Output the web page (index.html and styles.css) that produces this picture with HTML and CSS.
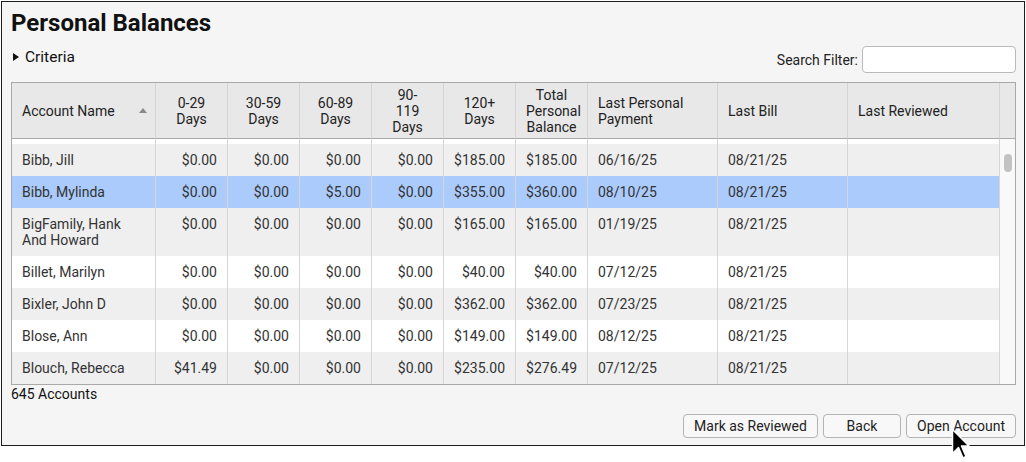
FILE: index.html
```html
<!DOCTYPE html>
<html lang="en">
<head>
	<meta charset="UTF-8">
	<title>Personal Balances</title>
	<link rel="stylesheet" href="styles.css">
</head>
<body>
	<div class="panel">
		<h1 class="title">Personal Balances</h1>

		<div class="toolbar">
			<div class="criteria"><span class="disclosure"></span>Criteria</div>
			<label class="search">Search Filter: <input type="text" class="search-input"></label>
		</div>

		<div class="grid">
			<table class="balances">
				<colgroup>
					<col style="width:143px">
					<col style="width:72px">
					<col style="width:72px">
					<col style="width:72px">
					<col style="width:72px">
					<col style="width:72px">
					<col style="width:72px">
					<col style="width:130px">
					<col style="width:130px">
					<col style="width:152px">
					<col style="width:16px">
				</colgroup>
				<thead>
					<tr>
						<th class="left sortable"><div class="sort-wrap"><span>Account Name</span><span class="sort-up"></span></div></th>
						<th>0-29<br>Days</th>
						<th>30-59<br>Days</th>
						<th>60-89<br>Days</th>
						<th>90-<br>119<br>Days</th>
						<th>120+<br>Days</th>
						<th>Total<br>Personal<br>Balance</th>
						<th class="left">Last Personal<br>Payment</th>
						<th class="left">Last Bill</th>
						<th class="left">Last Reviewed</th>
						<th class="scroll-head"></th>
					</tr>
				</thead>
				<tbody>
					<tr class="spacer">
						<td></td><td></td><td></td><td></td><td></td><td></td><td></td><td></td><td></td><td></td>
						<td class="track" rowspan="8"><div class="thumb"></div></td>
					</tr>
					<tr class="odd">
						<td>Bibb, Jill</td>
						<td class="num">$0.00</td><td class="num">$0.00</td><td class="num">$0.00</td><td class="num">$0.00</td>
						<td class="num">$185.00</td><td class="num">$185.00</td>
						<td>06/16/25</td><td>08/21/25</td><td></td>
					</tr>
					<tr class="selected">
						<td>Bibb, Mylinda</td>
						<td class="num">$0.00</td><td class="num">$0.00</td><td class="num">$5.00</td><td class="num">$0.00</td>
						<td class="num">$355.00</td><td class="num">$360.00</td>
						<td>08/10/25</td><td>08/21/25</td><td></td>
					</tr>
					<tr class="odd">
						<td>BigFamily, Hank<br>And Howard</td>
						<td class="num">$0.00</td><td class="num">$0.00</td><td class="num">$0.00</td><td class="num">$0.00</td>
						<td class="num">$165.00</td><td class="num">$165.00</td>
						<td>01/19/25</td><td>08/21/25</td><td></td>
					</tr>
					<tr>
						<td>Billet, Marilyn</td>
						<td class="num">$0.00</td><td class="num">$0.00</td><td class="num">$0.00</td><td class="num">$0.00</td>
						<td class="num">$40.00</td><td class="num">$40.00</td>
						<td>07/12/25</td><td>08/21/25</td><td></td>
					</tr>
					<tr class="odd">
						<td>Bixler, John D</td>
						<td class="num">$0.00</td><td class="num">$0.00</td><td class="num">$0.00</td><td class="num">$0.00</td>
						<td class="num">$362.00</td><td class="num">$362.00</td>
						<td>07/23/25</td><td>08/21/25</td><td></td>
					</tr>
					<tr>
						<td>Blose, Ann</td>
						<td class="num">$0.00</td><td class="num">$0.00</td><td class="num">$0.00</td><td class="num">$0.00</td>
						<td class="num">$149.00</td><td class="num">$149.00</td>
						<td>08/12/25</td><td>08/21/25</td><td></td>
					</tr>
					<tr class="odd">
						<td>Blouch, Rebecca</td>
						<td class="num">$41.49</td><td class="num">$0.00</td><td class="num">$0.00</td><td class="num">$0.00</td>
						<td class="num">$235.00</td><td class="num">$276.49</td>
						<td>07/12/25</td><td>08/21/25</td><td></td>
					</tr>
				</tbody>
			</table>
		</div>

		<div class="count">645 Accounts</div>

		<div class="actions">
			<button class="btn btn-review">Mark as Reviewed</button>
			<button class="btn btn-back">Back</button>
			<button class="btn btn-open">Open Account</button>
		</div>

		<svg class="cursor" width="22" height="32" viewBox="0 0 22 32">
			<path d="M1.5 1.5 L1.5 25.5 L7.5 19.5 L12 30 L15 28.5 L10.5 18 L18 18 Z" fill="#000" stroke="#fff" stroke-width="1.5" stroke-linejoin="round"/>
		</svg>
	</div>
</body>
</html>
```

FILE: styles.css
```css
* { box-sizing: border-box; }

html, body { min-height: 462px; }

body {
	margin: 0;
	background: #fff;
	font-family: Roboto, "Liberation Sans", sans-serif;
	font-size: 14px;
	color: #222;
}

.panel {
	position: relative;
	margin: 1px 0 0 1px;
	width: 1024px;
	height: 445px;
	padding: 7px 8px 0 9px;
	background: #f5f5f5;
	border: 1px solid #1c1c1c;
}

.title {
	margin: 0;
	font-size: 24px;
	line-height: 28px;
	font-weight: 700;
	color: #111;
}

.toolbar {
	display: flex;
	justify-content: space-between;
	align-items: flex-start;
	margin-top: 9px;
	height: 27px;
}

.criteria {
	display: flex;
	align-items: center;
	font-size: 15.5px;
	line-height: 22px;
	color: #111;
}

.disclosure {
	width: 0;
	height: 0;
	margin: 0 6px 0 2px;
	border-left: 6px solid #111;
	border-top: 4px solid transparent;
	border-bottom: 4px solid transparent;
}

.search {
	display: flex;
	align-items: center;
	gap: 4px;
	font-size: 14px;
	color: #222;
}

.search-input {
	width: 154px;
	height: 27px;
	border: 1px solid #bababa;
	border-radius: 4px;
	background: #fff;
	font: inherit;
}

.grid {
	margin-top: 9px;
	width: 1005px;
	border: 1px solid #a9a9a9;
	background: #fff;
}

.balances {
	width: 1003px;
	table-layout: fixed;
	border-collapse: separate;
	border-spacing: 0;
	font-size: 14px;
	line-height: 16px;
}

.balances th {
	height: 56px;
	padding: 0 10px;
	background: #e8e8e8;
	border-left: 1px solid #d4d4d4;
	border-bottom: 1px solid #a9a9a9;
	font-weight: 400;
	color: #222;
	text-align: center;
	vertical-align: middle;
}

.balances th:first-child { border-left: none; }
.balances th.left { text-align: left; }
.balances th.sortable { padding-right: 8px; }
.balances th.scroll-head { padding: 0; }

.sort-wrap {
	display: flex;
	justify-content: space-between;
	align-items: center;
}

.sort-up {
	width: 0;
	height: 0;
	border-left: 4.5px solid transparent;
	border-right: 4.5px solid transparent;
	border-bottom: 5px solid #8a8a8a;
}

.balances td {
	padding: 8px 10px;
	border-left: 1px solid #d6d6d6;
	color: #333;
	vertical-align: top;
	white-space: nowrap;
	overflow: hidden;
}

.balances td:first-child { border-left: none; }
.balances td.num { text-align: right; }

.balances tr.spacer td {
	height: 5px;
	padding: 0;
}

.balances tr.odd td { background: #efefef; }
.balances tr.selected td { background: #aacbfc; }

.balances td.track {
	padding: 0;
	background: #f9f9f9;
	vertical-align: top;
}

.thumb {
	width: 8px;
	height: 18px;
	margin: 15px 0 0 4px;
	border-radius: 4px;
	background: #c3c3c3;
}

.count {
	margin-top: 1px;
	line-height: 16px;
	color: #111;
	font-size: 14px;
}

.actions {
	display: flex;
	justify-content: flex-end;
	gap: 5px;
	margin-top: 12px;
}

.btn {
	height: 24px;
	padding: 0;
	border: 1px solid #b3b3b3;
	border-radius: 4px;
	background: #f8f8f8;
	font-family: inherit;
	font-size: 14px;
	color: #222;
}

.btn-review { width: 135px; }
.btn-back { width: 78px; }
.btn-open { width: 110px; }

.cursor {
	position: absolute;
	left: 949px;
	top: 426px;
}
```
